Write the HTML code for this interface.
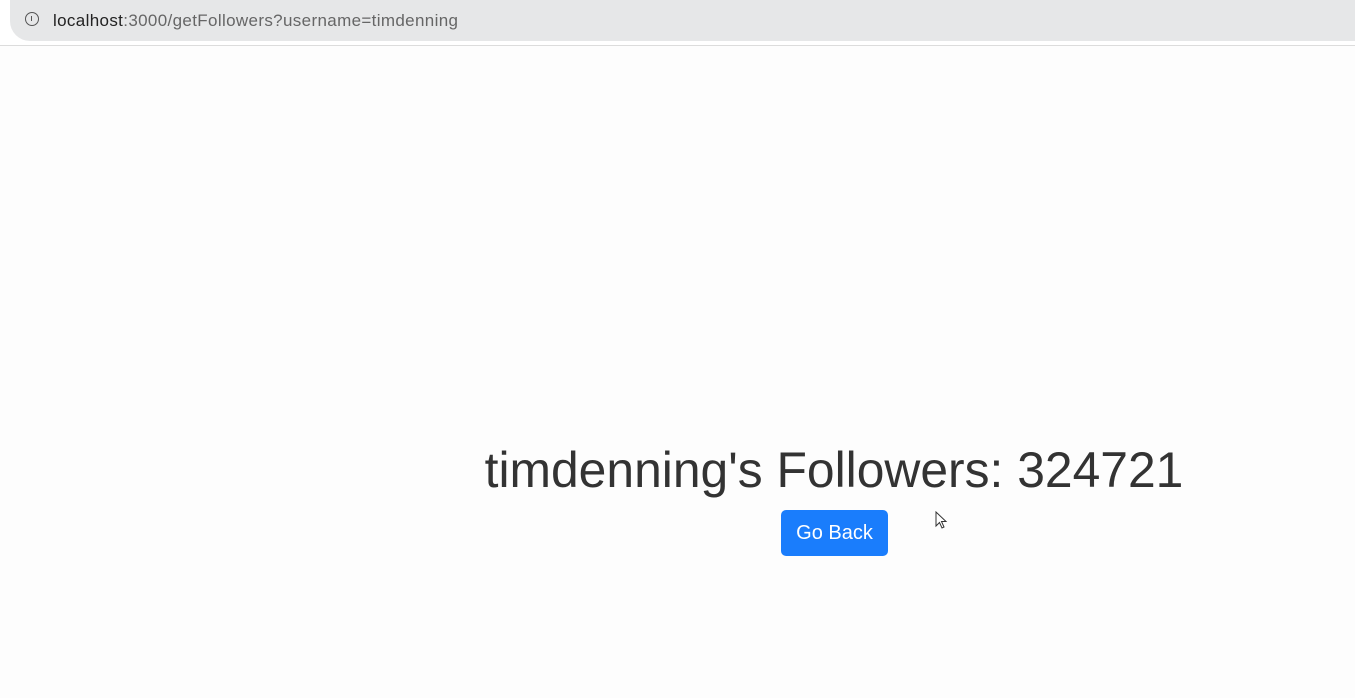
<!DOCTYPE html>
<html><head><meta charset="utf-8"><style>
html,body{margin:0;padding:0;width:1355px;height:698px;background:#fdfdfd;overflow:hidden;font-family:"Liberation Sans",Arial,sans-serif;position:relative}
.bar{position:absolute;left:0;top:0;width:1355px;height:45px;background:#fff;border-bottom:1px solid #dcdcdc}
.pill{position:absolute;left:10px;top:0;width:1360px;height:41px;background:#e6e7e8;border-radius:0 0 0 20px}
.url{position:absolute;left:53px;top:11px;font-size:17px;letter-spacing:0.35px;color:#666}
.url b{font-weight:normal;color:#222}
.icon{position:absolute;left:25px;top:12px;width:14px;height:14px;border:1.6px solid #555;border-radius:50%;box-sizing:border-box}
.icon:after{content:"";position:absolute;left:4.6px;top:2.5px;width:1.6px;height:5.5px;background:#555}
h1{position:absolute;left:0;width:1668px;text-align:center;top:440px;margin:0;font-weight:normal;font-size:49.8px;color:#333;line-height:60px}
.btn{position:absolute;left:781px;top:510px;width:107px;height:46px;background:#1a7dfc;border-radius:5px;color:#fff;font-size:20px;line-height:46px;text-align:center}
</style></head><body>
<div class="bar"><div class="pill"></div><div class="icon"></div><div class="url"><b>localhost</b>:3000/getFollowers?username=timdenning</div></div>
<h1>timdenning's Followers: 324721</h1>
<div class="btn">Go Back</div>
<svg style="position:absolute;left:935px;top:511px" width="14" height="20" viewBox="0 0 14 20"><path d="M1 1 L1 15 L4.5 11.5 L7 17 L9 16 L6.5 10.5 L11 10.5 Z" fill="#fff" stroke="#333" stroke-width="1"/></svg>
</body></html>
